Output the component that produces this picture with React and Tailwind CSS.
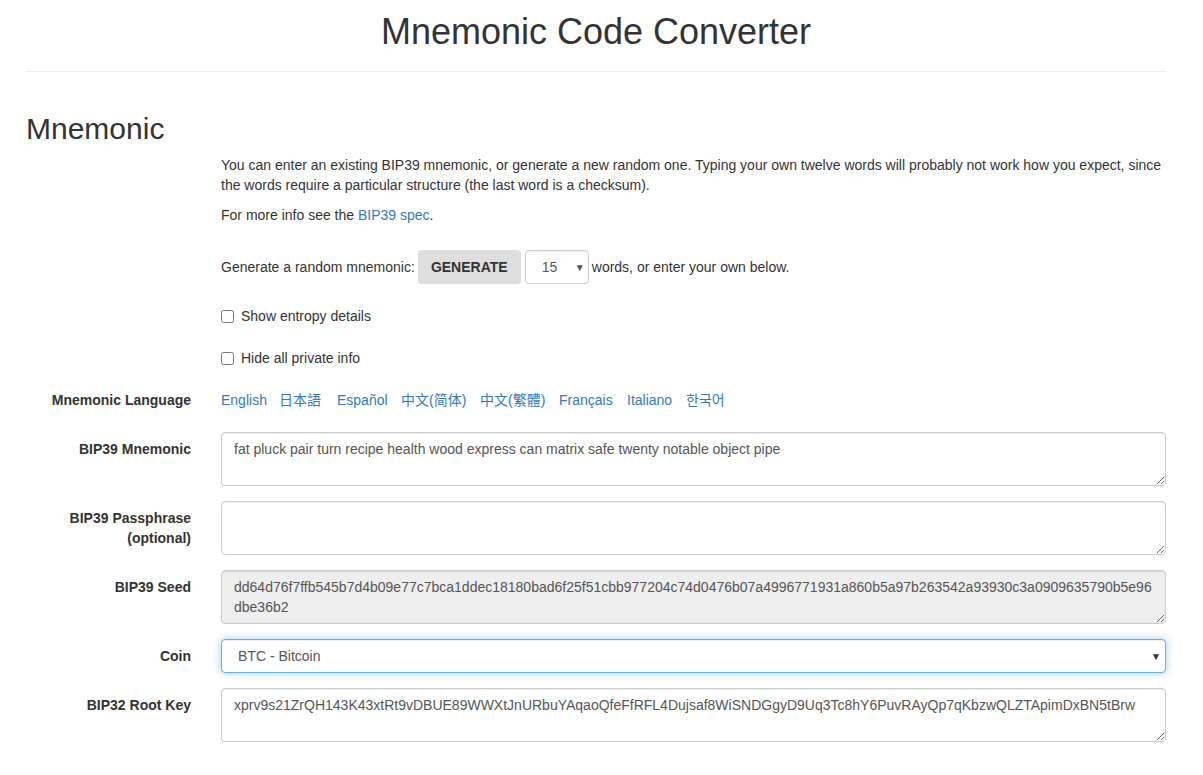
import React from "react";

const labelCls =
  "w-[165px] shrink-0 text-right pt-[7px] font-bold text-[14px] leading-[20px] text-[#333]";
const taCls =
  "block w-[945px] h-[54px] px-[12px] py-[6px] border border-[#ccc] rounded-[4px] text-[14px] leading-[20px] text-[#555] shadow-[inset_0_1px_1px_rgba(0,0,0,0.075)] outline-none resize-y";

function Row({ label, children, className = "" }) {
  return (
    <div className={"flex " + className}>
      <div className={labelCls}>{label}</div>
      <div className="ml-[30px] w-[945px]">{children}</div>
    </div>
  );
}

export default function App() {
  const font = { fontFamily: '"Liberation Sans", Arial, "Noto Sans CJK SC", sans-serif' };
  const langs = [
    ["English", "w-[58px]"],
    ["日本語", "w-[58px]"],
    ["Español", "w-[64px]"],
    ["中文(简体)", "w-[79px]"],
    ["中文(繁體)", "w-[79px]"],
    ["Français", "w-[68px]"],
    ["Italiano", "w-[59px]"],
    ["한국어", "w-[50px]"],
  ];
  return (
    <div className="bg-white min-h-[775px] text-[#333] text-[14px] leading-[20px]" style={font}>
      <div className="ml-[26px] w-[1140px] pt-[12px]">
        <h1 className="text-center text-[36px] leading-[40px] font-normal">Mnemonic Code Converter</h1>
        <div className="mt-[19px] h-px bg-[#eee]"></div>
        <h2 className="mt-[40px] text-[30px] leading-[33px] font-normal">Mnemonic</h2>

        <div className="ml-[195px] w-[945px]">
          <p className="mt-[10px]">
            You can enter an existing BIP39 mnemonic, or generate a new random one. Typing your own twelve words will probably not work how you expect, since the words require a particular structure (the last word is a checksum).
          </p>
          <p className="mt-[10px]">
            For more info see the <span className="text-[#337ab7]">BIP39 spec</span>.
          </p>
          <div className="mt-[25px] flex items-center h-[34px]">
            <span>Generate a random mnemonic:</span>
            <button className="ml-[3px] w-[103px] h-[34px] rounded-[4px] bg-[#dedede] font-bold text-[14px] text-[#333] uppercase">
              GENERATE
            </button>
            <div className="relative ml-[4px] w-[64px] h-[34px] border border-[#ccc] rounded-[4px] bg-white shadow-[inset_0_1px_1px_rgba(0,0,0,0.075)]">
              <span className="absolute left-[16px] top-[6px] text-[#555]">15</span>
              <span className="absolute left-[49px] top-[7px] text-[10px] text-[#555]">▼</span>
            </div>
            <span className="ml-[3px]">words, or enter your own below.</span>
          </div>
          <label className="mt-[22px] flex items-center h-[20px]">
            <input type="checkbox" className="w-[13px] h-[13px] m-0" />
            <span className="ml-[7px]">Show entropy details</span>
          </label>
          <label className="mt-[22px] flex items-center h-[20px]">
            <input type="checkbox" className="w-[13px] h-[13px] m-0" />
            <span className="ml-[7px]">Hide all private info</span>
          </label>
        </div>

        <div className="mt-[15px] flex">
          <div className={labelCls}>Mnemonic Language</div>
          <div className="ml-[30px] pt-[7px] flex text-[#337ab7]">
            {langs.map(([l, w]) => (
              <span key={l} className={"shrink-0 whitespace-nowrap " + w}>{l}</span>
            ))}
          </div>
        </div>

        <Row label="BIP39 Mnemonic" className="mt-[22px]">
          <textarea
            className={taCls + " bg-white"}
            defaultValue="fat pluck pair turn recipe health wood express can matrix safe twenty notable object pipe"
          />
        </Row>
        <Row label={<>BIP39 Passphrase<br />(optional)</>} className="mt-[15px]">
          <textarea className={taCls + " bg-white"} defaultValue="" />
        </Row>
        <Row label="BIP39 Seed" className="mt-[15px]">
          <textarea
            readOnly
            className={taCls + " bg-[#eee]"}
            defaultValue="dd64d76f7ffb545b7d4b09e77c7bca1ddec18180bad6f25f51cbb977204c74d0476b07a4996771931a860b5a97b263542a93930c3a0909635790b5e96dbe36b2"
          />
        </Row>
        <Row label="Coin" className="mt-[15px]">
          <div className="relative w-[945px] h-[34px] border border-[#66afe9] rounded-[4px] bg-white shadow-[inset_0_1px_1px_rgba(0,0,0,0.075),0_0_8px_rgba(102,175,233,0.6)]">
            <span className="absolute left-[16px] top-[6px] text-[#555]">BTC - Bitcoin</span>
            <span className="absolute right-[4px] top-[7px] text-[10px] text-[#333]">▼</span>
          </div>
        </Row>
        <Row label="BIP32 Root Key" className="mt-[15px]">
          <textarea
            className={taCls + " bg-white"}
            defaultValue="xprv9s21ZrQH143K43xtRt9vDBUE89WWXtJnURbuYAqaoQfeFfRFL4Dujsaf8WiSNDGgyD9Uq3Tc8hY6PuvRAyQp7qKbzwQLZTApimDxBN5tBrw"
          />
        </Row>
      </div>
    </div>
  );
}
